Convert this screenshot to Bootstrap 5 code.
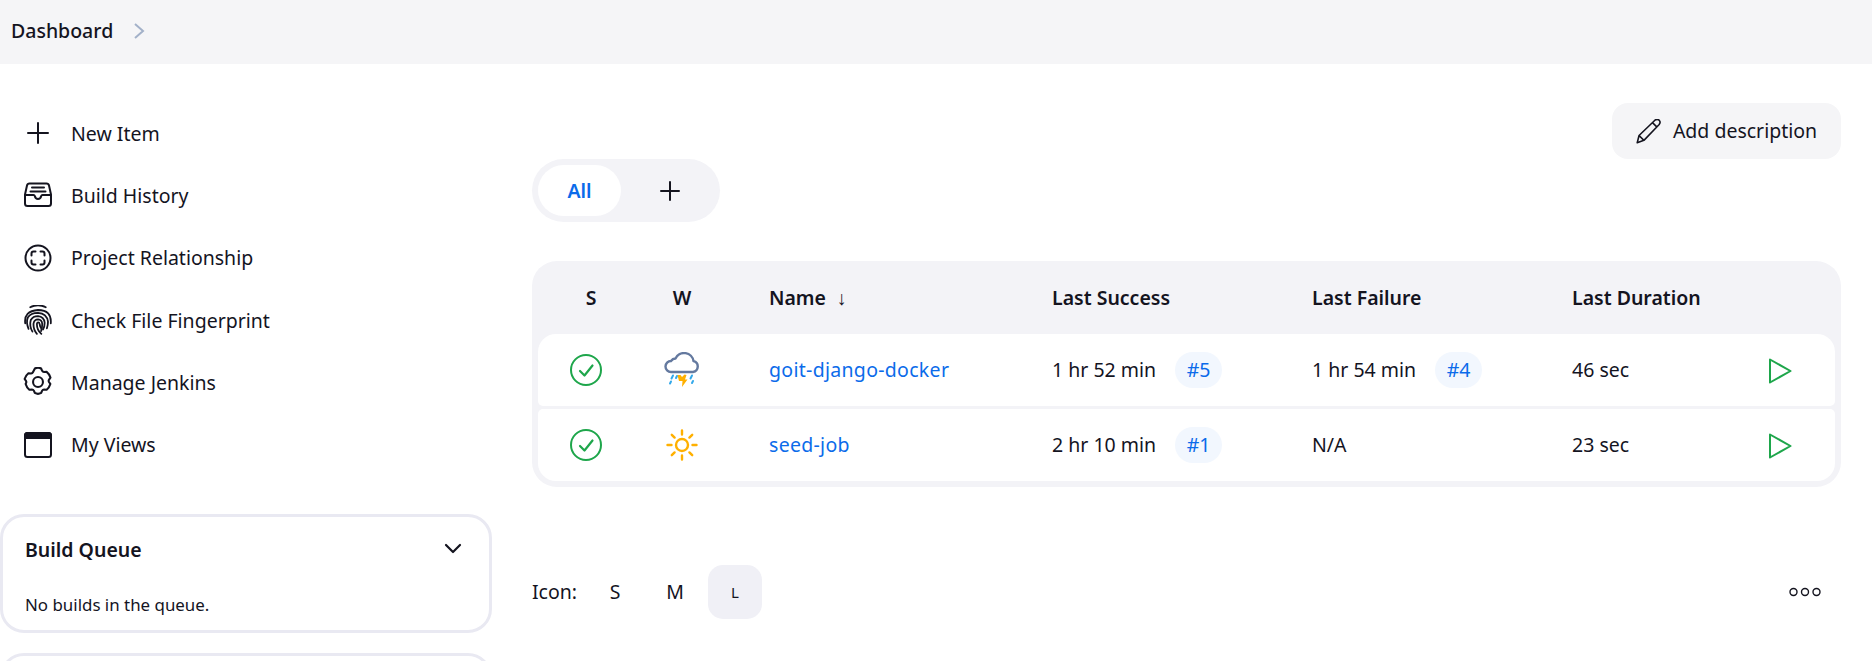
<!DOCTYPE html>
<html lang="en">
<head>
  <meta charset="UTF-8" />
  <title>Dashboard [Jenkins]</title>
  <meta name="viewport" content="width=device-width, initial-scale=1">
  <link href="https://cdn.jsdelivr.net/npm/bootstrap@5.3.3/dist/css/bootstrap.min.css" rel="stylesheet">
  <style>
    html, body { height: 661px; overflow: hidden; }
    body { font-family: "Noto Sans", "Liberation Sans", sans-serif; font-size: 19.5px; color: #14141f; background: #fff; }
    a { color: #0b6bea; }

    .crumb-bar { height: 64px; background: #f5f5f7; padding: 0 0 2px 11px; font-weight: 500; }
    .crumb-bar a { color: #14141f; }
    .crumb-bar svg { margin-left: 20px; }

    .page-body { height: 597px; overflow: hidden; }
    .side-col { width: 492px; flex: none; padding-top: 38px; }
    .side-link { height: 62.33px; padding-left: 23px; color: #14141f; }
    .side-link svg { width: 30px; height: 30px; flex: none; margin-right: 18px; }

    .side-pane { --bs-card-border-color: #e9e9f2; --bs-card-border-width: 3px; --bs-card-border-radius: 24px; margin-top: 38px; height: 119px; }
    .side-pane + .side-pane { margin-top: 20px; }
    .pane-title { font-weight: 600; height: 65px; padding: 0 27px 0 22px; }
    .pane-text { padding-left: 22px; font-size: 16.9px; margin-top: 10px; }

    .main-col { width: 1309px; margin-left: 40px; padding-top: 39px; flex: none; }
    .add-desc { height: 56px; width: 229px; background: #f5f5f7; border-radius: 16px; color: #14141f; }
    .add-desc svg { margin-right: 12px; }

    .view-tabs { width: 188px; height: 63px; padding: 6px 0 6px 6px; background: #f3f3f7; border-radius: 32px; }
    .view-tab { width: 83px; height: 51px; border-radius: 26px; font-weight: 600; flex: none; }
    .view-tab.on { background: #fff; }
    .view-add { width: 98px; flex: none; }

    .jobs-wrap { margin-top: 39px; padding: 0 6px 3px; background: #f3f3f7; border-radius: 25px; }
    .jobs-grid { --bs-table-bg: transparent; --bs-table-color: #14141f; border-collapse: separate; border-spacing: 0 3px; table-layout: fixed; }
    .jobs-grid thead th { height: 67px; padding: 0 0 0 16px; font-weight: 600; vertical-align: middle; }
    .jobs-grid tbody { --bs-table-bg: #fff; }
    .jobs-grid tbody td { height: 72px; padding: 0 0 0 16px; vertical-align: middle; }
    .jobs-grid .first-cell { padding-left: 0; text-align: center; }
    .jobs-grid thead .s-head { padding-left: 10px; text-align: center; }
    .jobs-grid .name-cell { padding-left: 39px; }
    .jobs-grid tbody .name-cell a { letter-spacing: .3px; }
    .jobs-grid tbody tr:first-child td:first-child { border-radius: 18px 0 0 5px; }
    .jobs-grid tbody tr:first-child td:last-child { border-radius: 0 18px 5px 0; }
    .jobs-grid tbody tr:last-child td:first-child { border-radius: 5px 0 0 18px; }
    .jobs-grid tbody tr:last-child td:last-child { border-radius: 0 5px 18px 0; }
    .run-tag { display: inline-block; width: 47px; height: 36px; line-height: 36px; margin-left: 19px; text-align: center; background: #f2f7fe; border-radius: 18px; }
    .sort-arrow { font-weight: 400; margin-left: 11px; }

    .icon-sizes { margin-top: 78px; }
    .size-pick { width: 54px; height: 54px; border-radius: 15px; color: #14141f; }
    .size-pick.on { background: #f0f0f6; font-size: 15px; }
    .size-first { margin-left: 11px; }
    .size-gap { margin-left: 6px; }
    .legend-dots { margin-left: auto; margin-right: 20px; }
  </style>
</head>
<body>
  <div class="crumb-bar d-flex align-items-center">
    <a href="#" class="text-decoration-none">Dashboard</a>
    <svg width="12" height="18" viewBox="0 0 12 18" fill="none" stroke="#a3b1c9" stroke-width="2"><path d="M2 2l8 7-8 7"/></svg>
  </div>

  <div class="page-body d-flex">
    <div class="side-col">
      <nav class="nav flex-column">
        <a href="#" class="side-link d-flex align-items-center text-decoration-none">
          <svg viewBox="0 0 30 30" fill="none" stroke="#14141f" stroke-width="2" stroke-linecap="round"><path d="M15 5v20M5 15h20"/></svg>New Item</a>
        <a href="#" class="side-link d-flex align-items-center text-decoration-none">
          <svg viewBox="0 0 30 30" fill="none" stroke="#14141f" stroke-width="2" stroke-linecap="round" stroke-linejoin="round"><path d="M6.500 3.500h17q2 0 2.500 2l2 9v9q0 2.500-2.500 2.500H4.500Q2 26 2 23.500v-9l2-9q.5-2 2.500-2z"/><path d="M3 15h7.500q1 0 1.300 1 .7 3 3.200 3t3.200-3q.3-1 1.300-1H27M9 7.500h12M7.500 11.500h15"/></svg>Build History</a>
        <a href="#" class="side-link d-flex align-items-center text-decoration-none">
          <svg viewBox="0 0 30 30" fill="none" stroke="#14141f" stroke-width="2" stroke-linecap="round" stroke-linejoin="round"><circle cx="15" cy="15" r="12.500"/><path d="M8.500 12.500v-2q0-2 2-2h2M17.500 8.500h2q2 0 2 2v2M21.500 17.500v2q0 2-2 2h-2M12.500 21.500h-2q-2 0-2-2v-2"/></svg>Project Relationship</a>
        <a href="#" class="side-link d-flex align-items-center text-decoration-none">
          <svg viewBox="1.500 1.500 27 27" fill="none" stroke="#14141f" stroke-width="1.600" stroke-linecap="round"><path d="M8 3.500q7-3.500 14 0M3.500 18q-1.500-11 11.500-12 12.500 0 11.500 12"/><path d="M6.500 23q-2.500-6-.5-10.500Q8.500 8.500 15 8.500q8 .5 9 8 0 3-1 6"/><path d="M10 25.500q-3-5-1.500-10.500 2-3.500 6.500-3.500 5.500.5 6 6 0 3.500-1.500 6"/><path d="M14 27.500q-3.500-4-3-9.500.8-3.500 4-3.500 3.500.2 3.800 4 0 3-1 6.500"/><path d="M18 27.500q-4-3.500-4-9 .2-1.300 1.200-1.300t1.300 1.500q.2 2.300 1.500 3.800"/></svg>Check File Fingerprint</a>
        <a href="#" class="side-link d-flex align-items-center text-decoration-none">
          <svg viewBox="2 2 26 26" fill="none" stroke="#14141f" stroke-width="1.800" stroke-linejoin="round"><circle cx="15" cy="15" r="4.300"/><path d="M12.300 3.300q2.700-1.500 5.400 0l.9 2q.5 1 1.600 1.100l2.300-.2q2.300 1.800 3.300 5l-1.200 1.700q-.7 1-.1 2.100l1.200 1.700q-.9 3.100-3.200 5l-2.300-.2q-1.100 0-1.600 1l-.9 2q-2.700 1.600-5.400 0l-.9-2q-.5-1-1.600-1l-2.300.2q-2.300-1.900-3.200-5L4.500 16.200q.7-1.100.1-2.100L3.400 12.400q1-3.200 3.300-5l2.300.2q1.100-.1 1.600-1.100z"/></svg>Manage Jenkins</a>
        <a href="#" class="side-link d-flex align-items-center text-decoration-none">
          <svg viewBox="0 0 30 30" fill="none" stroke="#14141f" stroke-width="2"><rect x="2" y="3" width="26" height="24" rx="2.500"/><path d="M2 5.500Q2 3 4.500 3h21Q28 3 28 5.500V8H2z" fill="#14141f"/></svg>My Views</a>
      </nav>

      <div class="card side-pane">
        <div class="pane-title d-flex align-items-center justify-content-between">
          <span>Build Queue</span>
          <svg width="18" height="12" viewBox="0 0 18 12" fill="none" stroke="#14141f" stroke-width="2.200" stroke-linecap="round" stroke-linejoin="round"><path d="M2 2l7 7 7-7"/></svg>
        </div>
        <div class="pane-text">No builds in the queue.</div>
      </div>
      <div class="card side-pane"></div>
    </div>

    <div class="main-col">
      <div class="d-flex justify-content-end">
        <a href="#" class="add-desc d-flex align-items-center justify-content-center text-decoration-none">
          <svg width="25" height="25" viewBox="2 2 20.500 20.500" fill="none" stroke="#14141f" stroke-width="1.300" stroke-linejoin="round"><path d="M3 21.500l1.500-6L17.500 3q2-1.500 3.500 0t0 3.500L8.500 19.500zM4.500 15.500l4 4M15.500 5l3.500 3.500"/></svg>Add description</a>
      </div>

      <div class="view-tabs d-flex align-items-center">
        <a href="#" class="view-tab on d-flex align-items-center justify-content-center text-decoration-none">All</a>
        <a href="#" class="view-add d-flex align-items-center justify-content-center">
          <svg width="22" height="22" viewBox="0 0 22 22" fill="none" stroke="#14141f" stroke-width="2" stroke-linecap="round"><path d="M11 2v18M2 11h18"/></svg>
        </a>
      </div>

      <div class="jobs-wrap">
        <table class="table table-borderless jobs-grid mb-0">
          <colgroup>
            <col style="width:96px"><col style="width:96px"><col style="width:306px">
            <col style="width:260px"><col style="width:260px"><col style="width:196px"><col>
          </colgroup>
          <thead>
            <tr>
              <th class="s-head">S</th>
              <th class="first-cell">W</th>
              <th class="name-cell">Name<span class="sort-arrow">↓</span></th>
              <th>Last Success</th>
              <th>Last Failure</th>
              <th>Last Duration</th>
              <th></th>
            </tr>
          </thead>
          <tbody>
            <tr>
              <td class="first-cell">
                <svg width="32" height="32" viewBox="0 0 32 32" fill="none" stroke="#1ea64b" stroke-width="2" stroke-linecap="round" stroke-linejoin="round"><circle cx="16" cy="16" r="15"/><path d="M10 17l4.500 4.500L22.500 11.500" stroke-width="2.200"/></svg>
              </td>
              <td class="first-cell">
                <svg width="36" height="36" viewBox="0 0 36 36" fill="none" stroke-linecap="round" stroke-linejoin="round"><path d="M7 20H29A5.500 5.500 0 0 0 29.500 9.200 9.500 9.500 0 0 0 11.500 6.500 6 6 0 0 0 7 9 5.500 5.500 0 0 0 7 20z" stroke="#64799f" stroke-width="2.400"/><path d="M9 23.500l-1.500 3M7 29.500l-1 2M13 24l-1 2M28 23.500l-1.500 3M29 29l-1 2" stroke="#34a9ea" stroke-width="2"/><path d="M13.500 23h3l1.500 2 2.500-2.500 2 .5-1.500 4.500h2.500L18 35l.5-6H15z" fill="#ffb000"/></svg>
              </td>
              <td class="name-cell"><a href="#" class="text-decoration-none">goit-django-docker</a></td>
              <td>1 hr 52 min<a href="#" class="run-tag text-decoration-none">#5</a></td>
              <td>1 hr 54 min<a href="#" class="run-tag text-decoration-none">#4</a></td>
              <td>46 sec</td>
              <td>
                <svg width="24" height="28" viewBox="0 0 24 28" fill="none" stroke="#1ea64b" stroke-width="2" stroke-linejoin="round"><path d="M2 2.500L22.500 14 2 25.500z"/></svg>
              </td>
            </tr>
            <tr>
              <td class="first-cell">
                <svg width="32" height="32" viewBox="0 0 32 32" fill="none" stroke="#1ea64b" stroke-width="2" stroke-linecap="round" stroke-linejoin="round"><circle cx="16" cy="16" r="15"/><path d="M10 17l4.500 4.500L22.500 11.500" stroke-width="2.200"/></svg>
              </td>
              <td class="first-cell">
                <svg width="32" height="32" viewBox="0 0 32 32" fill="none" stroke="#ffb000" stroke-width="2.400" stroke-linecap="round"><circle cx="16" cy="16" r="6"/><path d="M16 1.500v4M16 26.500v4M1.500 16h4M26.500 16h4M5.800 5.800l2.800 2.800M23.400 23.400l2.800 2.800M5.800 26.200l2.800-2.800M23.400 8.600l2.800-2.800"/></svg>
              </td>
              <td class="name-cell"><a href="#" class="text-decoration-none">seed-job</a></td>
              <td>2 hr 10 min<a href="#" class="run-tag text-decoration-none">#1</a></td>
              <td>N/A</td>
              <td>23 sec</td>
              <td>
                <svg width="24" height="28" viewBox="0 0 24 28" fill="none" stroke="#1ea64b" stroke-width="2" stroke-linejoin="round"><path d="M2 2.500L22.500 14 2 25.500z"/></svg>
              </td>
            </tr>
          </tbody>
        </table>
      </div>

      <div class="icon-sizes d-flex align-items-center">
        <span>Icon:</span>
        <a href="#" class="size-pick size-first d-flex align-items-center justify-content-center text-decoration-none">S</a>
        <a href="#" class="size-pick size-gap d-flex align-items-center justify-content-center text-decoration-none">M</a>
        <a href="#" class="size-pick on size-gap d-flex align-items-center justify-content-center text-decoration-none">L</a>
        <svg class="legend-dots" width="32" height="10" viewBox="0 0 32 10" fill="none" stroke="#14141f" stroke-width="1.400"><circle cx="4.500" cy="5" r="3.500"/><circle cx="16" cy="5" r="3.500"/><circle cx="27.500" cy="5" r="3.500"/></svg>
      </div>
    </div>
  </div>

  <script src="https://cdn.jsdelivr.net/npm/bootstrap@5.3.3/dist/js/bootstrap.bundle.min.js"></script>
</body>
</html>
